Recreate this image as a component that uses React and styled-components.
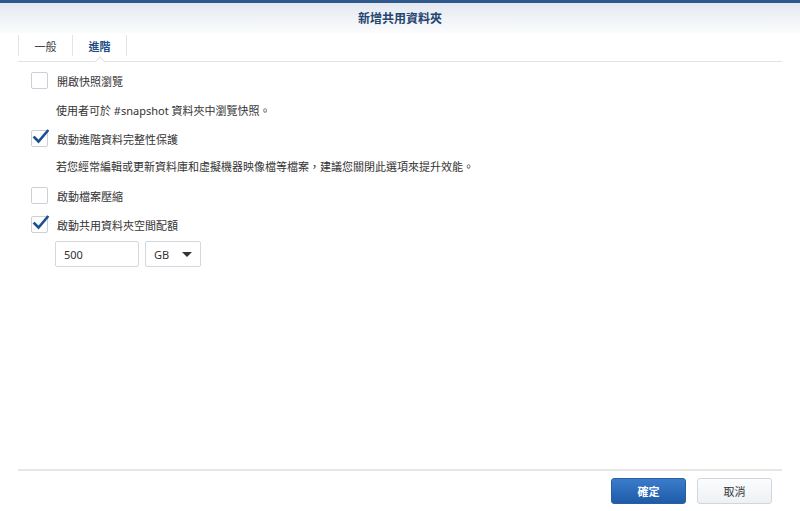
import React from "react";
import styled, { createGlobalStyle } from "styled-components";

const Global = createGlobalStyle`
  html, body { margin: 0; padding: 0; background: #fff; }
  body { font-family: "Noto Sans", "Noto Sans CJK TC", sans-serif; font-size: 11px; color: #333; }
`;

const Window = styled.div`
  width: 800px;
  height: 511px;
  display: flex;
  flex-direction: column;
  border-top: 3px solid #2e5a8e;
  box-sizing: border-box;
  background: #fff;
`;

const Header = styled.div`
  height: 30px;
  display: flex;
  align-items: center;
  justify-content: center;
  background: linear-gradient(#e4e9f1, #fbfcfd);
  font-weight: bold;
  font-size: 12px;
  color: #23456f;
`;

const TabBar = styled.div`
  margin: 0 18px;
  height: 28px;
  display: flex;
  border-bottom: 1px solid #e3e3e3;
  position: relative;
`;

const Tab = styled.div`
  width: 53px;
  display: flex;
  align-items: center;
  justify-content: center;
  border-left: 1px solid #e1e6ec;
  border-right: ${p => (p.$last ? "1px solid #e1e6ec" : "none")};
  margin: 2px 0 5px;
  font-size: 11px;
  color: ${p => (p.$active ? "#1f4c85" : "#444")};
  font-weight: ${p => (p.$active ? "bold" : "normal")};
  position: relative;
`;

const Caret = styled.span`
  position: absolute;
  bottom: -10px;
  left: 50%;
  width: 7px;
  height: 7px;
  margin-left: -4px;
  background: #fff;
  border-left: 1px solid #e3e3e3;
  border-top: 1px solid #e3e3e3;
  transform: rotate(45deg);
`;

const Content = styled.div`
  flex: 1;
  padding: 10px 31px 0;
  display: flex;
  flex-direction: column;
`;

const Row = styled.label`
  display: flex;
  align-items: center;
  gap: 9px;
  height: 17px;
  margin-bottom: ${p => p.$mb || 0}px;
  cursor: pointer;
`;

const Box = styled.span`
  width: 15px;
  height: 15px;
  border: 1px solid #c9d0d8;
  border-radius: 2px;
  background: #fff;
  position: relative;
  flex: none;
`;

const Check = styled.svg`
  position: absolute;
  left: 0px;
  top: -3px;
`;

const Desc = styled.div`
  padding-left: 25px;
  height: 17px;
  display: flex;
  align-items: center;
  margin: ${p => p.$mt}px 0 ${p => p.$mb}px;
`;

const Fields = styled.div`
  display: flex;
  gap: 6px;
  margin: 8px 0 0 24px;
`;

const Input = styled.div`
  width: 84px;
  height: 26px;
  border: 1px solid #d2d8de;
  border-radius: 2px;
  box-sizing: border-box;
  display: flex;
  align-items: center;
  padding-left: 8px;
  font-size: 11px;
  color: #333;
`;

const Select = styled.div`
  width: 56px;
  height: 26px;
  border: 1px solid #d2d8de;
  border-radius: 2px;
  box-sizing: border-box;
  display: flex;
  align-items: center;
  justify-content: space-between;
  padding: 0 8px;
  font-size: 11px;
`;

const Arrow = styled.span`
  width: 0;
  height: 0;
  border-left: 5px solid transparent;
  border-right: 5px solid transparent;
  border-top: 5px solid #333;
`;

const Footer = styled.div`
  margin: 0 18px;
  border-top: 2px solid #e6e6e6;
  height: 42px;
  box-sizing: border-box;
  display: flex;
  justify-content: flex-end;
  align-items: flex-start;
  padding: 7px 10px 0 0;
  gap: 11px;
`;

const Button = styled.button`
  width: 75px;
  height: 26px;
  border-radius: 3px;
  font-family: inherit;
  font-size: 11px;
  cursor: pointer;
  border: 1px solid ${p => (p.$primary ? "#2a5f9f" : "#cfd6dd")};
  background: ${p => (p.$primary ? "linear-gradient(#3a7ccb, #1f5ba8)" : "linear-gradient(#fbfcfd, #eef1f4)")};
  color: ${p => (p.$primary ? "#fff" : "#333")};
  font-weight: ${p => (p.$primary ? "bold" : "normal")};
`;

function CheckBox({ checked }) {
  return (
    <Box>
      {checked && (
        <Check width="18" height="18" viewBox="0 0 18 18">
          <path d="M2.5 9.5 L6.5 13.5 L15.5 3" fill="none" stroke="#1b4f8e" strokeWidth="2.6" strokeLinecap="square" />
        </Check>
      )}
    </Box>
  );
}

export default function App() {
  return (
    <>
      <Global />
      <Window>
        <Header>新增共用資料夾</Header>
        <TabBar>
          <Tab>一般</Tab>
          <Tab $active $last>
            進階
            <Caret />
          </Tab>
        </TabBar>
        <Content>
          <Row><CheckBox />開啟快照瀏覽</Row>
          <Desc $mt={12} $mb={12}>使用者可於 #snapshot 資料夾中瀏覽快照。</Desc>
          <Row><CheckBox checked />啟動進階資料完整性保護</Row>
          <Desc $mt={10} $mb={13}>若您經常編輯或更新資料庫和虛擬機器映像檔等檔案，建議您關閉此選項來提升效能。</Desc>
          <Row $mb={12}><CheckBox />啟動檔案壓縮</Row>
          <Row><CheckBox checked />啟動共用資料夾空間配額</Row>
          <Fields>
            <Input>500</Input>
            <Select>GB<Arrow /></Select>
          </Fields>
        </Content>
        <Footer>
          <Button $primary>確定</Button>
          <Button>取消</Button>
        </Footer>
      </Window>
    </>
  );
}
